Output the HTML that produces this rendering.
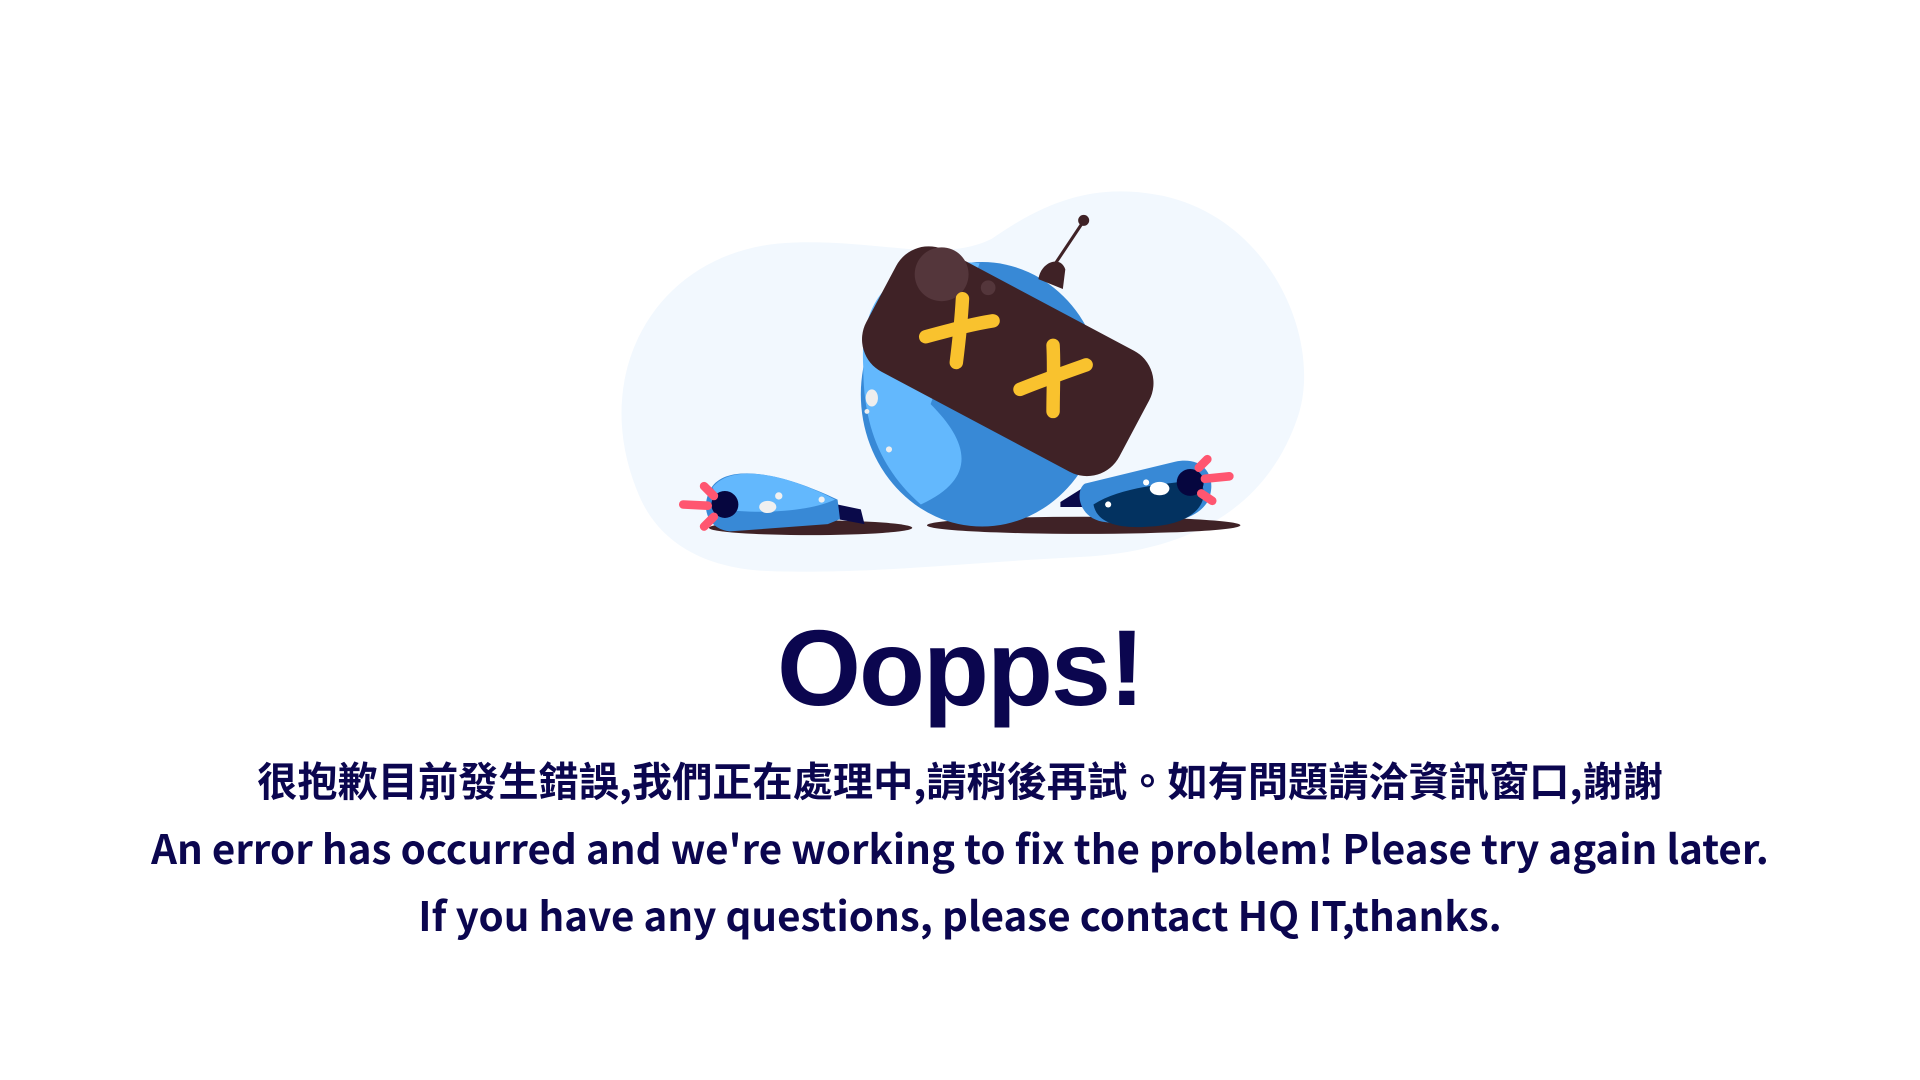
<!DOCTYPE html>
<html><head><meta charset="utf-8"><style>
html,body{margin:0;padding:0;background:#fff;width:1920px;height:1080px;overflow:hidden}
svg{position:absolute;left:0;top:0}
.t{position:absolute;left:0;width:1920px;text-align:center;color:#0b064f;font-weight:700;font-family:"Noto Sans CJK TC","Liberation Sans",sans-serif;white-space:nowrap}
</style></head><body>
<svg width="1920" height="1080" viewBox="0 0 1568 882">
<path d="M520 400 C480 300 540 200 650 198 C720 196 770 215 810 195 C860 160 900 150 950 160 C1040 180 1080 280 1060 340 C1040 400 990 450 880 455 C780 460 700 470 620 466 C570 462 535 440 520 400 Z" fill="#f2f8fe"/>
<ellipse cx="662" cy="431" rx="83" ry="6" fill="#3f2226"/>
<ellipse cx="885" cy="429" rx="128" ry="7" fill="#3f2226"/>
<path d="M684 412 L703 416 L706 428 L684 424Z" fill="#0a0a4a"/>
<path d="M580 400 C590 380 630 382 684 408 L686 424 L676 428 L596 434 C578 432 572 415 580 400Z" fill="#3889d6"/>
<path d="M582 398 C596 380 635 384 682 408 C660 418 620 420 590 416Z" fill="#63b8fd"/>
<circle cx="592" cy="412" r="11" fill="#06063f"/>
<g stroke="#ff5670" stroke-width="7" stroke-linecap="round"><line x1="558" y1="412" x2="578" y2="413"/><line x1="575" y1="397" x2="583" y2="405"/><line x1="575" y1="430" x2="583" y2="422"/></g>
<ellipse cx="627" cy="414" rx="7" ry="5" fill="#f0f0f0"/><circle cx="636" cy="405" r="3" fill="#f0f0f0"/><circle cx="671" cy="408" r="2.5" fill="#f0f0f0"/>
<ellipse cx="802" cy="322" rx="99" ry="108" fill="#3889d6"/>
<path d="M705 300 C700 220 760 210 800 215 L760 330 C790 360 800 390 752 412 C715 380 705 340 705 300Z" fill="#63b8fd"/>
<ellipse cx="712" cy="325" rx="5" ry="7" fill="#eee"/><circle cx="708" cy="336" r="2" fill="#eee"/><circle cx="726" cy="367" r="2.5" fill="#eee"/>
<path d="M866 410 L885 398 L890 414 L866 414Z" fill="#0a0a4a"/>
<path d="M886 395 L960 377 C985 372 995 392 986 410 C975 428 940 432 900 426 C880 422 878 400 886 395Z" fill="#3889d6"/>
<path d="M893 412 C915 398 950 395 980 392 C990 410 975 428 940 430 C915 432 896 428 893 412Z" fill="#033260"/>
<circle cx="972" cy="394" r="11" fill="#06063f"/>
<g stroke="#ff5670" stroke-width="7" stroke-linecap="round"><line x1="984" y1="391" x2="1004" y2="389"/><line x1="979" y1="382" x2="986" y2="375"/><line x1="981" y1="403" x2="990" y2="409"/></g>
<ellipse cx="947" cy="399" rx="8" ry="5.5" fill="#fff"/><circle cx="936" cy="394" r="2.5" fill="#fff"/><circle cx="905" cy="412" r="2.5" fill="#fff"/>
<line x1="860" y1="218" x2="884" y2="182" stroke="#3f2226" stroke-width="2.5"/>
<circle cx="885" cy="180" r="4.5" fill="#3f2226"/>
<path d="M848 228 C850 214 866 208 870 220 L868 236Z" fill="#3f2226"/>
<g transform="translate(823 295) rotate(28)">
<rect x="-117" y="-56" width="234" height="112" rx="30" fill="#3f2226"/>
</g>
<circle cx="769" cy="224" r="22" fill="#54363b"/>
<circle cx="807" cy="235" r="6" fill="#54363b"/>
<g stroke="#f9c22e" stroke-width="11" stroke-linecap="round" fill="none">
<path d="M786 244 C785 262 783 280 781 296"/><path d="M756 275 C775 270 792 265 811 262"/>
<path d="M860 282 C861 300 860 318 860 336"/><path d="M833 318 C850 311 870 304 887 298"/>
</g>
</svg>
<div class="t" style="top:603px;font-size:108px;line-height:130px;font-family:'Liberation Sans',sans-serif;letter-spacing:-2px">Oopps!</div>
<div class="t" style="top:753px;font-size:40.2px;line-height:52px">很抱歉目前發生錯誤,我們正在處理中,請稍後再試。如有問題請洽資訊窗口,謝謝</div>
<div class="t" style="top:820px;font-size:40.3px;line-height:54px">An error has occurred and we're working to fix the problem! Please try again later.</div>
<div class="t" style="top:887px;font-size:40.3px;line-height:54px">If you have any questions, please contact HQ IT,thanks.</div>
</body></html>
